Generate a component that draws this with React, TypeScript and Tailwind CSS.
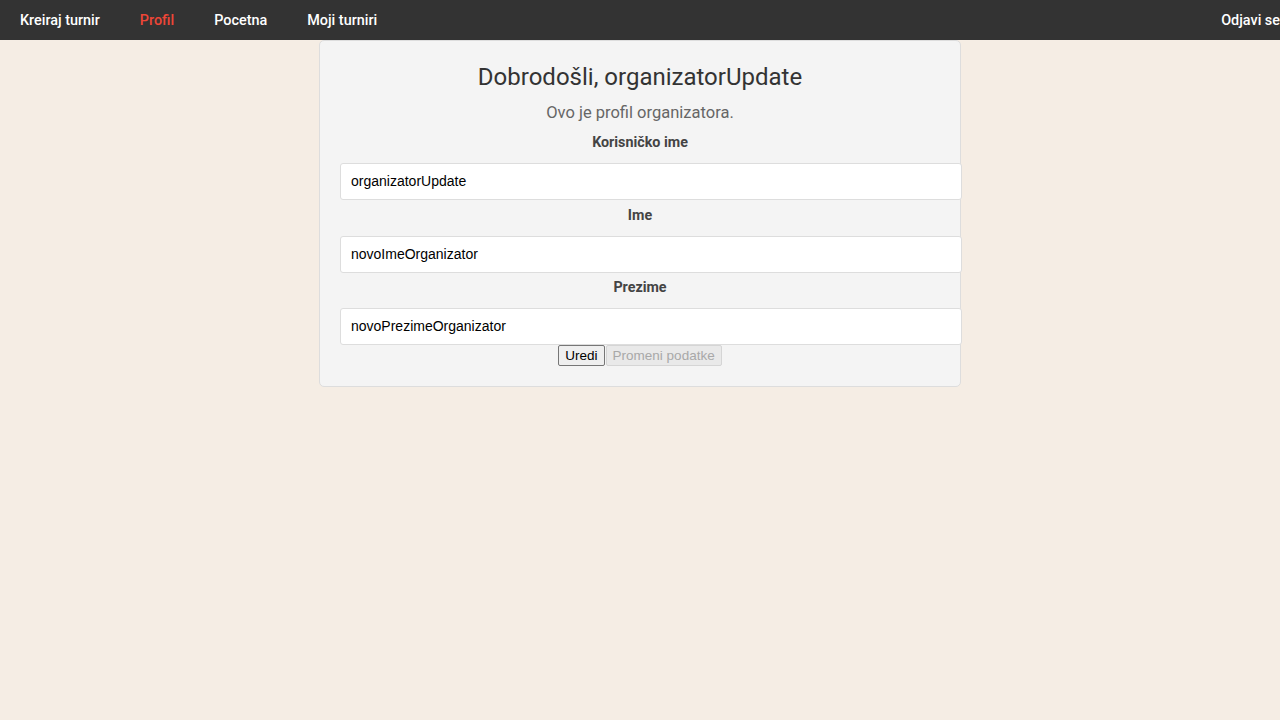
const navLinks = ['Kreiraj turnir', 'Profil', 'Pocetna', 'Moji turniri'];

const fields = [
  { label: 'Korisničko ime', value: 'organizatorUpdate' },
  { label: 'Ime', value: 'novoImeOrganizator' },
  { label: 'Prezime', value: 'novoPrezimeOrganizator' },
];

const App = () => {
  return (
    <div className="min-h-screen bg-[#f5ede4] font-['Roboto',sans-serif]">
      {/* Navbar */}
      <nav className="h-10 bg-[#333333] flex items-center pt-px">
        {navLinks.map(link => (
          <a
            key={link}
            href="#"
            className={`px-5 text-[14.4px] font-medium ${link === 'Profil' ? 'text-[#ee4637]' : 'text-white'}`}
          >
            {link}
          </a>
        ))}
        <a href="#" className="ml-auto pl-5 text-[14.4px] font-medium text-white whitespace-nowrap">
          Odjavi se
        </a>
      </nav>

      {/* Profil kartica */}
      <div className="w-[642px] mx-auto bg-[#f4f4f4] border border-[#dddddd] rounded-[5px] p-5 flex flex-col items-center">
        <h1 className="text-2xl leading-[30px] text-[#333333] translate-y-px">Dobrodošli, organizatorUpdate</h1>
        <p className="mt-[9px] text-[16.5px] leading-6 text-[#666666] translate-y-px">Ovo je profil organizatora.</p>

        {fields.map((f, i) => (
          <div key={f.label} className="w-full flex flex-col items-center">
            <label
              className={`${i === 0 ? 'mt-2' : i === 1 ? 'mt-[5px]' : 'mt-[4px]'} mb-[11px] text-[14.3px] leading-5 font-bold text-[#444444]`}
            >
              {f.label}
            </label>
            <input
              type="text"
              defaultValue={f.value}
              readOnly
              className="self-start box-content w-full px-[10px] py-[10px] bg-white border border-[#dddddd] rounded-[3px] text-sm leading-[15px] text-black font-['Liberation_Sans',Arial,sans-serif] outline-none"
            />
          </div>
        ))}

        <div className="flex font-['Liberation_Sans',Arial,sans-serif] text-[13.5px] leading-[17px]">
          <button className="px-[6px] py-px bg-[#efefef] border border-[#767676] rounded-[2px] text-black">
            Uredi
          </button>
          <button disabled className="ml-px px-[6px] py-px bg-[#e9e9e9] border border-[#d5d5d5] rounded-[2px] text-[#a8a8a8]">
            Promeni podatke
          </button>
        </div>
      </div>
    </div>
  );
};

export default App;
